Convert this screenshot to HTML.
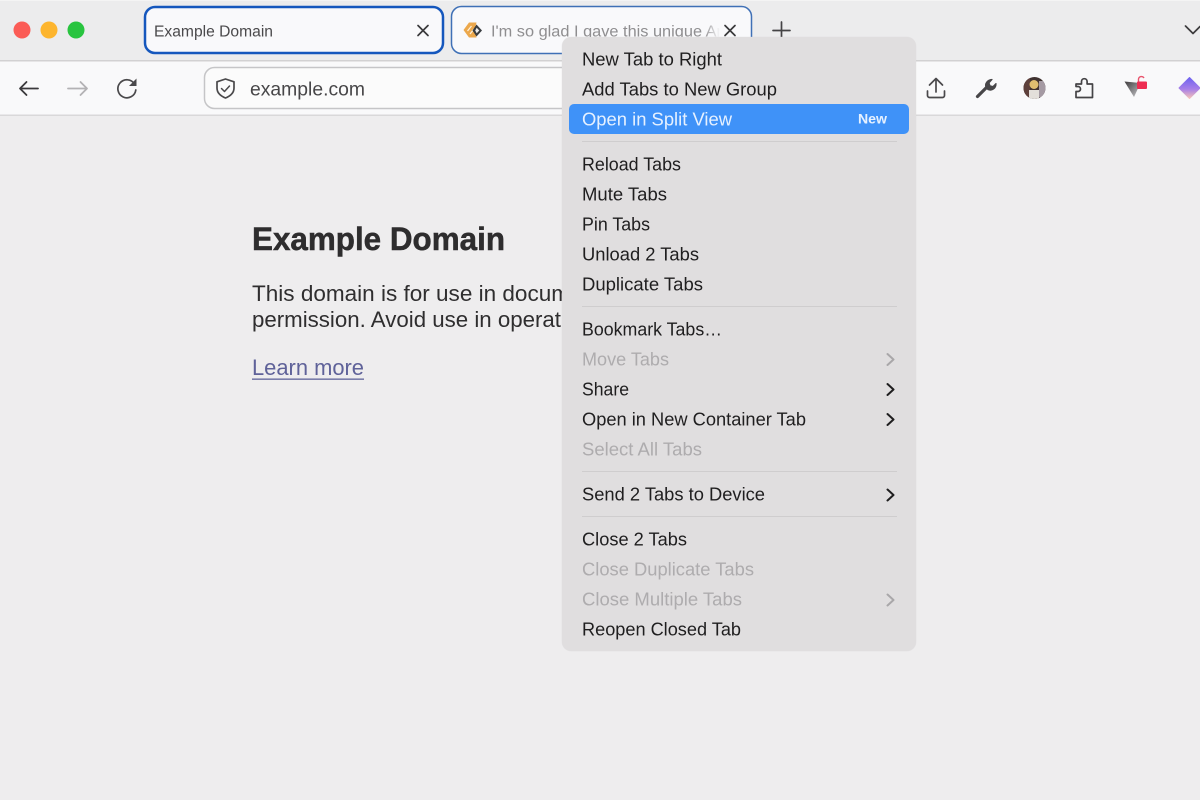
<!DOCTYPE html>
<html lang="en">
<head>
<meta charset="utf-8">
<title>Example Domain</title>
<style>
html,body{margin:0;padding:0;width:1200px;height:800px;overflow:hidden;background:#eeedee}
svg{display:block}
text{font-family:"Liberation Sans",sans-serif}
.m{font-size:18px;fill:#1f1e1f}
.d{font-size:18px;fill:#aeacae}
</style>
</head>
<body>
<svg width="1200" height="800" viewBox="0 0 1200 800" xmlns="http://www.w3.org/2000/svg">
<defs>
<linearGradient id="fade" x1="0" x2="1" y1="0" y2="0"><stop offset="0" stop-color="#f9f9fb" stop-opacity="0"/><stop offset="1" stop-color="#f9f9fb"/></linearGradient>
<linearGradient id="gem" x1="0" x2="0" y1="0" y2="1"><stop offset="0" stop-color="#6f63f0"/><stop offset=".55" stop-color="#a77fe8"/><stop offset="1" stop-color="#f5c3b8"/></linearGradient>
<linearGradient id="gemrot" gradientTransform="rotate(45 .5 .5)" x1="0" x2="1" y1="0" y2="1"><stop offset="0" stop-color="#6f63f0"/><stop offset=".55" stop-color="#a77fe8"/><stop offset="1" stop-color="#f5c3b8"/></linearGradient>
<linearGradient id="tri" x1="0" x2="1" y1="0" y2="1"><stop offset="0" stop-color="#3d3a3c"/><stop offset="1" stop-color="#c9c9cc"/></linearGradient>
<clipPath id="av"><circle cx="1034.500" cy="88" r="11"/></clipPath>
<clipPath id="tabclip"><rect x="470" y="15" width="250" height="30"/></clipPath>
</defs>

<!-- window -->
<rect width="1200" height="800" fill="#eeedee"/>
<rect width="1200" height="60" fill="#ececed"/>
<rect y="0" width="1200" height="1" fill="#f4f4f4"/>
<rect y="60" width="1200" height="1.500" fill="#d2d1d2"/>
<rect y="61.500" width="1200" height="53" fill="#f9f9fa"/>
<rect y="114.500" width="1200" height="1.500" fill="#d9d8d9"/>

<!-- traffic lights -->
<circle cx="22" cy="30" r="8.500" fill="#fb5c56"/>
<circle cx="49" cy="30" r="8.500" fill="#fdb52e"/>
<circle cx="76" cy="30" r="8.500" fill="#28c43f"/>

<!-- tabs -->
<rect x="145" y="7" width="298" height="46" rx="10" fill="#f9f9fb" stroke="#1557bd" stroke-width="2.500"/>
<text x="154" y="36.500" font-size="15.500" fill="#4a494b" textLength="119" lengthAdjust="spacingAndGlyphs">Example Domain</text>
<path d="M418 25.500l10 10M428 25.500l-10 10" stroke="#3a393b" stroke-width="1.700" fill="none" stroke-linecap="round"/>

<rect x="451.500" y="6.500" width="300" height="47" rx="10" fill="#f9f9fb" stroke="#3f70b6" stroke-width="1.500"/>
<!-- favicon -->
<path d="M463.500 30l5.500-7.500h7.500l-1 4 -1 3.500 1 3.500 1 4H469z" fill="#eca84c"/>
<path d="M467.500 31l4-5M470 34l4-5" stroke="#fff2dc" stroke-width="1.200" fill="none"/>
<path d="M476.500 24.500l5.500 6-5.500 6-4-6z" fill="#3a3d40"/>
<path d="M476.700 27.800l2.600 2.700-2.600 2.700-1.500-2.700z" fill="#eee"/>
<g clip-path="url(#tabclip)"><text x="491" y="36.500" font-size="15.500" fill="#8f8e90" textLength="231" lengthAdjust="spacingAndGlyphs">I'm so glad I gave this unique Ar</text></g>
<rect x="704" y="15" width="16" height="30" fill="url(#fade)"/>
<rect x="720" y="15" width="25" height="30" fill="#f9f9fb"/>
<path d="M725 25.500l10 10M735 25.500l-10 10" stroke="#3a393b" stroke-width="1.700" fill="none" stroke-linecap="round"/>

<!-- new tab + chevron -->
<path d="M781.500 22v17M773 30.500h17" stroke="#444345" stroke-width="1.700" fill="none" stroke-linecap="round"/>
<path d="M1185.500 26l7.500 7.500 7-7" stroke="#3c3b3d" stroke-width="1.700" fill="none" stroke-linecap="round" stroke-linejoin="round"/>

<!-- nav -->
<path d="M38 88.500H20M26.500 82L20 88.500l6.500 6.500" stroke="#3a393b" stroke-width="1.800" fill="none" stroke-linecap="round" stroke-linejoin="round"/>
<path d="M68 88.500h19M80.500 82l6.500 6.500-6.500 6.500" stroke="#b3b2b4" stroke-width="1.800" fill="none" stroke-linecap="round" stroke-linejoin="round"/>
<path d="M134.500 84a9 9 0 1 0 1.300 6" stroke="#4a494b" stroke-width="1.700" fill="none" stroke-linecap="round"/>
<path d="M136.500 78.500v7.500h-7.500z" fill="#4a494b"/>

<!-- url bar -->
<rect x="204.500" y="67.500" width="400" height="41" rx="10" fill="#fbfbfb" stroke="#c5c5c7" stroke-width="1.500"/>
<path d="M225.500 79l8.500 2.800v6.200c0 4.700-3.600 8-8.500 10-4.900-2-8.500-5.300-8.500-10v-6.200z" fill="none" stroke="#4a494b" stroke-width="1.700" stroke-linejoin="round"/>
<path d="M221.500 88.500l3 3 5-5.500" fill="none" stroke="#4a494b" stroke-width="1.500" stroke-linecap="round" stroke-linejoin="round"/>
<text x="250" y="95.500" font-size="19.500" fill="#474648" textLength="115" lengthAdjust="spacingAndGlyphs">example.com</text>

<!-- toolbar icons -->
<path d="M936 92V79M929.500 85l6.500-6.500 6.500 6.500" stroke="#4a494b" stroke-width="1.700" fill="none" stroke-linecap="round" stroke-linejoin="round"/>
<path d="M927.500 91v4.500a2 2 0 0 0 2 2h13a2 2 0 0 0 2-2V91" stroke="#4a494b" stroke-width="1.700" fill="none" stroke-linecap="round"/>
<path d="M977.500 96.500l9.500-9.500" stroke="#474648" stroke-width="3.200" fill="none" stroke-linecap="round"/>
<path d="M986 87.500c-1.500-3.500 1.200-7.800 6-8l-3 3.300 1 3 3 .8 3-3c.2 4.800-4.200 7.600-8 6z" fill="#474648" stroke="#474648" stroke-width="1.200" stroke-linejoin="round"/>

<!-- avatar -->
<circle cx="1034.500" cy="88" r="11" fill="#3f3230"/>
<g clip-path="url(#av)">
<rect x="1023" y="77" width="7" height="22" fill="#5e403b"/>
<rect x="1039" y="81" width="7" height="16" fill="#a59aa3"/>
<circle cx="1034" cy="84.500" r="4.500" fill="#dfbe70"/>
<rect x="1029" y="90" width="10" height="9" fill="#e3dfda"/>
</g>

<!-- puzzle -->
<path d="M1076 84h5.500v-2.500a2.800 2.800 0 0 1 5.600 0V84h5.400v13.500H1076v-6h2a2.500 2.500 0 0 0 0-5h-2z" fill="none" stroke="#454446" stroke-width="1.700" stroke-linejoin="round"/>

<!-- shield/lock -->
<path d="M1124.500 81.500l16 1.500 -6.500 14z" fill="url(#tri)"/>
<path d="M1138.500 82v-3a3 3 0 0 1 5.500-1" fill="none" stroke="#e8536c" stroke-width="1.400"/>
<rect x="1137" y="81.500" width="10" height="7.500" rx="1" fill="#ee2d52"/>

<!-- gem -->
<path d="M1189.500 77.500l10.500 10.500-10.500 10.500L1179 88z" fill="url(#gem)" stroke="url(#gem)" stroke-width="1" stroke-linejoin="round"/>

<!-- page content -->
<text x="252" y="250" font-size="32" font-weight="700" fill="#2e2d2e" stroke="#2e2d2e" stroke-width=".5" textLength="253" lengthAdjust="spacingAndGlyphs">Example Domain</text>
<text x="252" y="301" font-size="22" fill="#2f2e2f" textLength="318" lengthAdjust="spacingAndGlyphs">This domain is for use in docum</text>
<text x="252" y="327" font-size="22" fill="#2f2e2f" textLength="309" lengthAdjust="spacingAndGlyphs">permission. Avoid use in operat</text>
<text x="252" y="375" font-size="22" fill="#5f6299" textLength="112" lengthAdjust="spacingAndGlyphs">Learn more</text>
<rect x="252" y="378.500" width="112" height="1.300" fill="#5f6299"/>

<!-- menu -->
<rect x="561.500" y="36.500" width="355" height="615" rx="10" fill="#d6d5d6" opacity=".3"/>
<rect x="562" y="37" width="354" height="614" rx="9" fill="#e0dedf"/>
<rect x="569" y="104" width="340" height="30" rx="5" fill="#3f92f8"/>

<g transform="translate(0 .7)">
<text class="m" x="582" y="65" textLength="140" lengthAdjust="spacingAndGlyphs">New Tab to Right</text>
<text class="m" x="582" y="95" textLength="195" lengthAdjust="spacingAndGlyphs">Add Tabs to New Group</text>
<text x="582" y="125" font-size="18" fill="#e6f1ff" textLength="150" lengthAdjust="spacingAndGlyphs">Open in Split View</text>
<text x="858" y="123" font-size="13.500" font-weight="700" fill="#e6f1ff" textLength="29" lengthAdjust="spacingAndGlyphs">New</text>
<text class="m" x="582" y="170" textLength="99" lengthAdjust="spacingAndGlyphs">Reload Tabs</text>
<text class="m" x="582" y="200" textLength="85" lengthAdjust="spacingAndGlyphs">Mute Tabs</text>
<text class="m" x="582" y="230" textLength="68" lengthAdjust="spacingAndGlyphs">Pin Tabs</text>
<text class="m" x="582" y="260" textLength="117" lengthAdjust="spacingAndGlyphs">Unload 2 Tabs</text>
<text class="m" x="582" y="290" textLength="121" lengthAdjust="spacingAndGlyphs">Duplicate Tabs</text>
<text class="m" x="582" y="335" textLength="140" lengthAdjust="spacingAndGlyphs">Bookmark Tabs…</text>
<text class="d" x="582" y="365" textLength="87" lengthAdjust="spacingAndGlyphs">Move Tabs</text>
<text class="m" x="582" y="395" textLength="47" lengthAdjust="spacingAndGlyphs">Share</text>
<text class="m" x="582" y="425" textLength="224" lengthAdjust="spacingAndGlyphs">Open in New Container Tab</text>
<text class="d" x="582" y="455" textLength="120" lengthAdjust="spacingAndGlyphs">Select All Tabs</text>
<text class="m" x="582" y="500" textLength="183" lengthAdjust="spacingAndGlyphs">Send 2 Tabs to Device</text>
<text class="m" x="582" y="545" textLength="105" lengthAdjust="spacingAndGlyphs">Close 2 Tabs</text>
<text class="d" x="582" y="575" textLength="172" lengthAdjust="spacingAndGlyphs">Close Duplicate Tabs</text>
<text class="d" x="582" y="605" textLength="160" lengthAdjust="spacingAndGlyphs">Close Multiple Tabs</text>
<text class="m" x="582" y="635" textLength="159" lengthAdjust="spacingAndGlyphs">Reopen Closed Tab</text>
</g>
<rect x="582" y="141" width="315" height="1" fill="#cfcdce"/>
<rect x="582" y="306" width="315" height="1" fill="#cfcdce"/>
<rect x="582" y="471" width="315" height="1" fill="#cfcdce"/>
<rect x="582" y="516" width="315" height="1" fill="#cfcdce"/>

<!-- chevrons -->
<g fill="none" stroke-width="2" stroke-linecap="round" stroke-linejoin="round">
<path d="M887.500 354l6 5.500-6 5.500" stroke="#a9a7a9"/>
<path d="M887.500 384l6 5.500-6 5.500" stroke="#1f1e1f"/>
<path d="M887.500 414l6 5.500-6 5.500" stroke="#1f1e1f"/>
<path d="M887.500 489.500l6 5.500-6 5.500" stroke="#1f1e1f"/>
<path d="M887.500 594.500l6 5.500-6 5.500" stroke="#a9a7a9"/>
</g>
</svg>
</body>
</html>
